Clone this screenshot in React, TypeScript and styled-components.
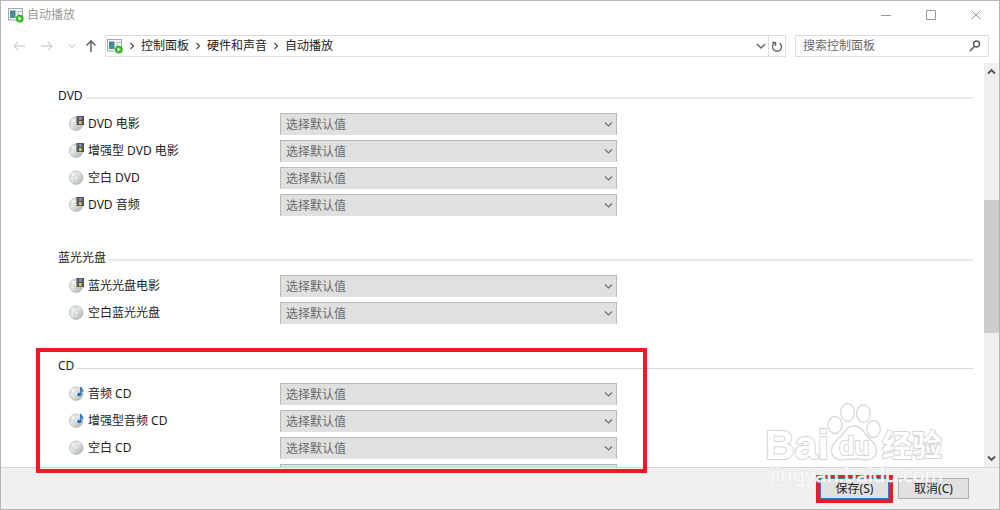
import React from "react";
import styled, { createGlobalStyle } from "styled-components";

const GlobalStyle = createGlobalStyle`
  *, *::before, *::after { box-sizing: border-box; }
  body {
    margin: 0;
    font-family: "Noto Sans", "Noto Sans CJK SC", sans-serif;
    font-size: 12px;
    line-height: 18px;
    color: #1c1c1c;
    background: #fff;
  }
  button, input, select { font: inherit; color: inherit; margin: 0; }
`;

const Window = styled.div`
  position: relative;
  display: flex;
  flex-direction: column;
  height: 100vh;
  border: 1px solid #b4b4b4;
  border-top-color: #bcbab8;
  overflow: hidden;
`;

const TitleBar = styled.header`
  display: flex;
  align-items: center;
  flex: none;
  height: 28px;
  padding: 0 1px 0 7px;
`;

const Title = styled.h1`
  flex: 1;
  margin: 0 0 0 3px;
  font-size: 12px;
  font-weight: 400;
  color: #999;
`;

const CaptionButton = styled.button`
  display: grid;
  place-items: center;
  width: 45px;
  height: 28px;
  padding: 0;
  border: 0;
  background: none;
  color: #999;
`;

const NavBar = styled.nav`
  display: flex;
  align-items: center;
  flex: none;
  height: 34px;
  padding: 0 10px;
`;

const NavButton = styled.button<{ $width: number; $dim?: boolean }>`
  display: flex;
  align-items: center;
  justify-content: center;
  flex: none;
  width: ${(p) => p.$width}px;
  height: 20px;
  padding: 0;
  border: 0;
  background: none;
  color: ${(p) => (p.$dim ? "#d4d4d4" : "#6a6a6a")};

  svg { flex: none; }
`;

const AddressBar = styled.div`
  display: flex;
  align-items: center;
  flex: 1;
  height: 22px;
  margin-right: 9px;
  padding-left: 1px;
  border: 1px solid #dedede;
`;

const Crumbs = styled.ol`
  display: flex;
  align-items: center;
  flex: 1;
  margin: 0;
  padding: 0;
  list-style: none;
`;

const Crumb = styled.li`
  display: flex;
  align-items: center;

  svg { margin: 0 5px; color: #555; }
`;

const CrumbLink = styled.a`
  color: inherit;
  text-decoration: none;
`;

const RefreshCell = styled.div`
  display: flex;
  height: 20px;
  border-left: 1px solid #dedede;
`;

const SearchBox = styled.label`
  display: flex;
  align-items: center;
  flex: none;
  width: 194px;
  height: 22px;
  padding: 0 7px;
  border: 1px solid #dedede;
  color: #5c5c5c;
`;

const SearchInput = styled.input`
  flex: 1;
  min-width: 0;
  padding: 0;
  border: 0;
  outline: 0;
  background: none;

  &::placeholder { color: #6a6a6a; opacity: 1; }
`;

const Body = styled.div`
  display: flex;
  flex: 1;
  min-height: 0;
`;

const Content = styled.main`
  flex: 1;
  min-width: 0;
  padding: 24px 11px 0 57px;
  overflow: hidden;
`;

const Section = styled.section`
  margin-bottom: 33px;
`;

const SectionHeader = styled.div<{ $line: number }>`
  display: flex;
  align-items: flex-end;
  gap: 3px;
  margin-bottom: 8px;

  &::after {
    content: "";
    flex: 1;
    height: ${(p) => p.$line}px;
    margin-bottom: 6px;
    background: ${(p) => (p.$line === 1 ? "#dadada" : "#e8e8e8")};
  }
`;

const SectionTitle = styled.h2`
  margin: 0;
  font-size: 12px;
  font-weight: 400;
`;

const Row = styled.div`
  display: flex;
  align-items: center;
  height: 22px;
  margin-bottom: 5px;
  padding-left: 11px;
`;

const RowLabel = styled.label`
  flex: none;
  width: 195px;
  padding-left: 3px;
`;

const SelectWrap = styled.div`
  display: grid;
  align-items: center;
  width: 337px;

  & > * { grid-area: 1 / 1; }
  svg { justify-self: end; margin-right: 4px; color: #6e6e6e; pointer-events: none; }
`;

const Select = styled.select`
  appearance: none;
  width: 100%;
  height: 22px;
  padding: 1px 5px 0;
  border: 1px solid #b9b9b9;
  border-bottom-color: #e0e0e0;
  border-radius: 0;
  background: #e0e0e0;
  color: #6a6a6a;
`;

const ScrollBar = styled.div`
  display: flex;
  flex-direction: column;
  flex: none;
  width: 15px;
  background: #efefef;
`;

const ScrollButton = styled.button`
  display: flex;
  align-items: center;
  justify-content: center;
  height: 17px;
  padding: 0;
  border: 0;
  background: none;
  color: #505050;
`;

const ScrollTrack = styled.div`
  flex: 1;
  padding-top: 120px;
`;

const ScrollThumb = styled.div`
  height: 133px;
  background: #cdcdcd;
`;

const Footer = styled.footer`
  display: flex;
  justify-content: flex-end;
  align-items: flex-start;
  flex: none;
  gap: 5px;
  height: 42px;
  padding: 7px 30px 0;
  border-top: 1px solid #d6d6d6;
  background: #f0f0f0;
`;

const ActionButton = styled.button<{ $primary?: boolean }>`
  width: ${(p) => (p.$primary ? 69 : 71)}px;
  height: 21px;
  margin-top: ${(p) => (p.$primary ? 0 : 3)}px;
  padding: 0;
  border: 1px solid ${(p) => (p.$primary ? "#2f7fd0" : "#b0b0b0")};
  background: #e1e1e1;
  line-height: 18px;
`;

const SaveMark = styled.div`
  display: flex;
  padding: 3px 4px 4px;
  background: #ed1c24;
`;

const SectionMark = styled.div`
  position: absolute;
  left: 35px;
  bottom: 36px;
  width: 611px;
  height: 125px;
  border: 4px solid #ed1c24;
  pointer-events: none;
`;

const Watermark = styled.svg`
  position: absolute;
  right: 51px;
  bottom: 19px;
  pointer-events: none;
`;

type GlyphProps = { d: string; w: number; h: number; stroke?: number };

const Glyph = ({ d, w, h, stroke = 1 }: GlyphProps) => (
  <svg width={w} height={h} viewBox={`0 0 ${w} ${h}`} fill="none" stroke="currentColor" strokeWidth={stroke} aria-hidden="true">
    <path d={d} />
  </svg>
);

const ChevronDown = () => <Glyph w={9} h={7} d="M1 1.5 4.5 5 8 1.5" stroke={1.2} />;
const ChevronRight = () => <Glyph w={8} h={8} d="M2.5 1 5.5 4 2.5 7" stroke={1.3} />;

const AutoPlayIcon = () => (
  <svg width="16" height="16" viewBox="0 0 16 16" aria-hidden="true">
    <rect x="0.5" y="1.5" width="14" height="11.5" fill="#f4f6f7" stroke="#a5abb0" />
    <rect x="2" y="3.5" width="5.5" height="7.5" fill="#4d7fa6" />
    <path d="M2 11V7l3-2 2.500 6z" fill="#3e9a83" />
    <path d="M9.5 4.5h1.5M12 4.5h1.5M9.5 7h1.5" stroke="#8c969e" />
    <circle cx="11.8" cy="11.6" r="3.9" fill="#35b51f" />
    <path d="M10.5 9.4v4.4l3.4-2.2z" fill="#fff" />
  </svg>
);

type DiscKind = "film" | "blank" | "music";

const DiscIcon = ({ kind }: { kind: DiscKind }) => (
  <svg width="16" height="16" viewBox="0 0 16 16" aria-hidden="true">
    <defs>
      <linearGradient id="disc" x1="0" y1="0" x2="1" y2="1">
        <stop offset="0" stopColor="#c4c8c7" />
        <stop offset="0.4" stopColor="#e6e9e8" />
        <stop offset="0.65" stopColor="#cbd0ce" />
        <stop offset="1" stopColor="#a9afad" />
      </linearGradient>
    </defs>
    <circle cx="7.2" cy="7.7" r="6.8" fill="url(#disc)" stroke="#a8adac" strokeWidth="0.6" />
    <path d="M7.200 7.700 1.600 5A6.300 6.300 0 0 1 4.600 2z" fill="#fff" opacity="0.6" />
    <circle cx="7.2" cy="7.7" r="1.8" fill="#f3f5f4" stroke="#b5baba" strokeWidth="0.6" />
    {kind === "film" && (
      <>
        <rect x="7.5" y="0" width="7.500" height="9" fill="#4b4c50" />
        <rect x="9.900" y="0.8" width="2.800" height="3.200" fill="#8493b4" />
        <rect x="9.900" y="5" width="2.800" height="3.200" fill="#d9c05c" />
        <path d="M8.600 .5v8M14 .5v8" stroke="#8d8f93" strokeWidth="0.7" strokeDasharray="1 1" />
      </>
    )}
    {kind === "music" && (
      <>
        <path d="M11.800 1v7" stroke="#1f6fb0" strokeWidth="1.3" />
        <path d="M11.800 1c.3 2 3 2.200 2.200 5-.3-1.400-1-1.700-2.200-2z" fill="#1f6fb0" stroke="#1f6fb0" strokeWidth="0.5" />
        <ellipse cx="10.300" cy="8.500" rx="2.100" ry="1.700" fill="#1f6fb0" />
      </>
    )}
  </svg>
);

type Item = { id: string; label?: string; icon?: DiscKind };

const sections: { title: string; line: number; items: Item[] }[] = [
  {
    title: "DVD",
    line: 2,
    items: [
      { id: "dvd-movie", label: "DVD 电影", icon: "film" },
      { id: "dvd-enhanced", label: "增强型 DVD 电影", icon: "film" },
      { id: "dvd-blank", label: "空白 DVD", icon: "blank" },
      { id: "dvd-audio", label: "DVD 音频", icon: "film" },
    ],
  },
  {
    title: "蓝光光盘",
    line: 2,
    items: [
      { id: "bd-movie", label: "蓝光光盘电影", icon: "film" },
      { id: "bd-blank", label: "空白蓝光光盘", icon: "blank" },
    ],
  },
  {
    title: "CD",
    line: 1,
    items: [
      { id: "cd-audio", label: "音频 CD", icon: "music" },
      { id: "cd-enhanced", label: "增强型音频 CD", icon: "music" },
      { id: "cd-blank", label: "空白 CD", icon: "blank" },
      { id: "cd-other" },
    ],
  },
];

const crumbs = ["控制面板", "硬件和声音", "自动播放"];

const BrandMark = () => (
  <Watermark width="182" height="90" viewBox="0 0 182 90" aria-hidden="true">
    <g fill="#fff" fillOpacity="0.85" stroke="#dadada" strokeWidth="1.4">
      <ellipse cx="69" cy="25" rx="7" ry="8.500" />
      <ellipse cx="81.500" cy="12.500" rx="6.800" ry="9" />
      <ellipse cx="97.500" cy="13.500" rx="6.800" ry="8.800" />
      <ellipse cx="107.500" cy="29" rx="6.800" ry="8.500" />
      <path d="M88 26c6 0 9 4 12 9 4 5 10 8 10.500 15 0 7-5 10.500-11 10-4-.5-8-1-12-1s-7 .5-11 1c-6 .5-11-3-11-9.500 0-7 5-10 10-15 4-5 6-9.500 12.500-9.500z" />
    </g>
    <g fill="#fff" stroke="#d6d6d6" strokeWidth="2" paintOrder="stroke" fontFamily="'Liberation Sans', 'Noto Sans CJK SC', sans-serif" fontWeight="700">
      <text x="-1" y="59" fontSize="41">Bai</text>
      <text x="73" y="55" fontSize="25">du</text>
      <text x="116" y="56" fontSize="30">经验</text>
    </g>
    <text x="4" y="82" fontSize="20" fill="#fff" fillOpacity="0.85" stroke="#e4e4e4" strokeWidth="1" paintOrder="stroke">jingyan.baidu.com</text>
  </Watermark>
);

export default function App() {
  return (
    <>
      <GlobalStyle />
      <Window>
        <TitleBar>
          <AutoPlayIcon />
          <Title>自动播放</Title>
          <CaptionButton aria-label="最小化"><Glyph w={10} h={10} d="M0 5.500H10" /></CaptionButton>
          <CaptionButton aria-label="最大化"><Glyph w={10} h={10} d="M.5.5h9v9h-9z" /></CaptionButton>
          <CaptionButton aria-label="关闭"><Glyph w={10} h={10} d="M.5.5l9 9M9.500.5l-9 9" /></CaptionButton>
        </TitleBar>
        <NavBar>
          <NavButton $width={16} $dim aria-label="后退"><Glyph w={14} h={10} d="M13 5H2M6 1 2 5l4 4" stroke={1.3} /></NavButton>
          <NavButton $width={40} $dim aria-label="前进"><Glyph w={14} h={10} d="M1 5h11M8 1l4 4-4 4" stroke={1.3} /></NavButton>
          <NavButton $width={10} $dim aria-label="最近的位置"><Glyph w={8} h={6} d="M1 1.500 4 4.500 7 1.500" stroke={1.3} /></NavButton>
          <NavButton $width={28} aria-label="上移"><Glyph w={12} h={14} d="M6 13V2M1.500 6.500 6 2l4.500 4.500" stroke={1.6} /></NavButton>
          <AddressBar>
            <AutoPlayIcon />
            <Crumbs>
              {crumbs.map((name) => (
                <Crumb key={name}>
                  <ChevronRight />
                  <CrumbLink href="#">{name}</CrumbLink>
                </Crumb>
              ))}
            </Crumbs>
            <NavButton $width={14} aria-label="以前的位置"><Glyph w={10} h={8} d="M1 2l4 4 4-4" stroke={1.5} /></NavButton>
            <RefreshCell>
              <NavButton $width={16} aria-label="刷新">
                <Glyph w={12} h={13} d="M3.500 3A4.500 4.500 0 1 0 8.500 3M1 2.500h3.500V6" stroke={1.4} />
              </NavButton>
            </RefreshCell>
          </AddressBar>
          <SearchBox>
            <SearchInput type="search" placeholder="搜索控制面板" aria-label="搜索控制面板" />
            <Glyph w={12} h={12} d="M10.500 4a3 3 0 1 1-6 0 3 3 0 0 1 6 0zM5.300 6.500 1 11" stroke={1.5} />
          </SearchBox>
        </NavBar>
        <Body>
          <Content>
            {sections.map((section) => (
              <Section key={section.title}>
                <SectionHeader $line={section.line}><SectionTitle>{section.title}</SectionTitle></SectionHeader>
                {section.items.map((item) => (
                  <Row key={item.id}>
                    {item.icon ? <DiscIcon kind={item.icon} /> : <svg width="16" height="16" aria-hidden="true" />}
                    <RowLabel htmlFor={item.id}>{item.label}</RowLabel>
                    <SelectWrap>
                      <Select id={item.id}>{item.label && <option>选择默认值</option>}</Select>
                      <ChevronDown />
                    </SelectWrap>
                  </Row>
                ))}
              </Section>
            ))}
          </Content>
          <ScrollBar>
            <ScrollButton aria-label="向上滚动"><Glyph w={9} h={7} d="M1 5.500 4.500 2 8 5.500" stroke={1.8} /></ScrollButton>
            <ScrollTrack><ScrollThumb /></ScrollTrack>
            <ScrollButton aria-label="向下滚动"><Glyph w={9} h={7} d="M1 1.500 4.500 5 8 1.500" stroke={1.8} /></ScrollButton>
          </ScrollBar>
        </Body>
        <Footer>
          <SaveMark><ActionButton $primary>保存(S)</ActionButton></SaveMark>
          <ActionButton>取消(C)</ActionButton>
        </Footer>
        <SectionMark />
        <BrandMark />
      </Window>
    </>
  );
}
